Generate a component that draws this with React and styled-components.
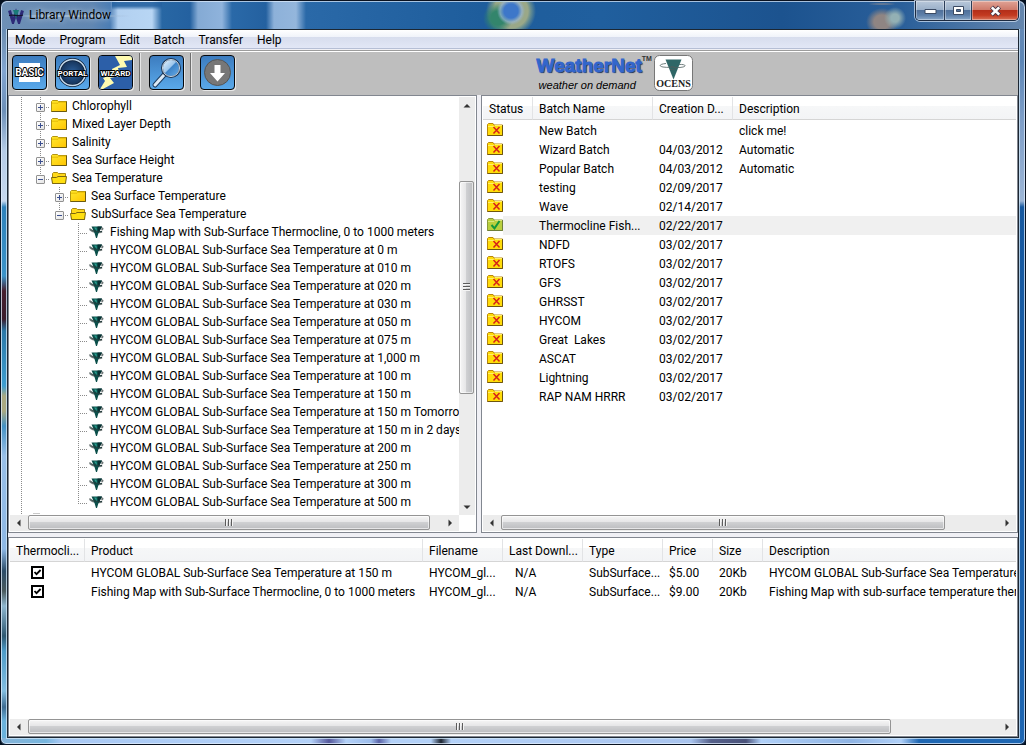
import React from 'react';
import styled, { createGlobalStyle, css } from 'styled-components';

const GlobalStyle = createGlobalStyle`
  * { box-sizing: border-box; }
  body {
    margin: 0;
    background: #04101f;
    font: 12px/18px Roboto, "Segoe UI", "Open Sans", sans-serif;
    color: #000;
  }
  button, input { font: inherit; color: inherit; margin: 0; padding: 0; border: 0; }
`;

/* ---------- window frame ---------- */

const Frame = styled.div`
  display: flex;
  flex-direction: column;
  min-height: 100vh;
  padding: 0 6px 6px;
  border: 1px solid #0a1220;
  border-radius: 7px 7px 6px 6px;
  box-shadow: inset 0 0 0 1px rgba(225, 238, 252, 0.75);
  background:
    linear-gradient(to right, #86b4d8 0, #77b6de 45px, #a9c9f4 60px, #b3d1f8 310px, #55589c 328px, #b3d1f8 345px,
      #9dbdec 370px, #5a63a8 378px, #b3d1f8 390px, #b3d1f8 430px, #1d2430 440px, #b3d1f8 450px, #a9c4ee 690px,
      #55608a 710px, #4a527a 745px, #b0d0f8 760px, #8fb4e4 850px, #b0d0f8 900px, #1e66b2 918px) bottom / 100% 6px no-repeat,
    linear-gradient(to bottom, #4f7db0 0, #7394b8 40px, #82a5d0 70px, #6c8fb8 110px, #b5cbe6 150px, #c6d8ee 200px,
      #2f82bb 206px, #3b93c8 275px, #46202f 290px, #3a1c2c 318px, #2b78a8 330px, #3f9ed0 385px, #a9a982 395px,
      #a9a982 410px, #4492c4 425px, #98bfe8 455px, #8db7e4 548px, #2c4c68 570px, #4a5a5e 590px, #8eb6cf 605px,
      #2f5872 635px, #4d9bc8 650px, #82bde0 690px, #3f6c92 706px, #6ab2dc 720px) left / 7px 100% no-repeat,
    linear-gradient(to bottom, #6c8db6 0, #5d86b6 60px, #7f9fc8 120px, #9db6d6 200px, #16589f 206px, #1e66b2 100%) right / 7px 100% no-repeat,
    #2a64a2;
`;

const TitleBar = styled.header`
  position: relative;
  display: flex;
  align-items: flex-start;
  height: 28px;
  margin: 0 -5px;
  padding: 0 5px 0 6px;
  border-top: 1px solid rgba(225, 238, 252, 0.7);
  border-radius: 6px 6px 0 0;
  background:
    radial-gradient(circle at 509px 9px, #3d77c9 0 7px, rgba(150, 180, 210, 0.7) 11px, rgba(120, 160, 160, 0) 14px),
    radial-gradient(circle at 496px 16px, #33856c 0 7px, rgba(60, 133, 110, 0) 15px),
    radial-gradient(circle at 509px 9px, #9aa888 0 17px, rgba(130, 160, 140, 0.7) 20px, rgba(60, 120, 150, 0) 25px),
    radial-gradient(ellipse at 880px 2px, #a8cdf2 0 8px, #8a8a92 14px, rgba(120, 120, 130, 0) 22px),
    radial-gradient(circle at 893px 16px, #93b0b4 0 4px, rgba(120, 140, 150, 0) 11px),
    radial-gradient(ellipse 16px 14px at 880px 20px, #8f8583 0 50%, rgba(120, 120, 130, 0) 100%),
    radial-gradient(ellipse at 66px 14px, rgba(178, 198, 220, 0.9) 0, rgba(160, 184, 212, 0.6) 45px, rgba(140, 170, 204, 0) 72px),
    linear-gradient(rgba(36, 97, 160, 0.9) 0 4px, rgba(36, 97, 160, 0) 8px) 110px 0 / 50px 100% no-repeat,
    linear-gradient(to right, #6e90b6 0, #6187b2 90px, #4b7db4 108px, #b2d0f0 116px, #b8d6f4 150px, #2867a4 160px,
      #2461a0 188px, #84aad4 196px, #8fb3dc 220px, #2a69a8 230px, #2461a0 264px, #8db1d9 272px, #94b6dc 294px,
      #2a69a8 304px, #1e5d9c 480px, #205f9e 600px, #1c538f 780px, #2a5f9a 900px, #6586ad 100%);
`;

const AppIcon = styled.svg`
  flex: none;
  width: 16px;
  height: 16px;
  margin-top: 6px;
`;

const WindowTitle = styled.h1`
  flex: 1;
  margin: 0 0 0 5px;
  font-size: 12px;
  line-height: 27px;
  font-weight: 400;
  text-shadow: 0 0 6px rgba(255, 255, 255, 0.8);
`;

const WindowButtons = styled.div`
  display: flex;
  height: 20px;
  margin: -1px 0 0;
  border: 1px solid #1c2a40;
  border-top: 0;
  border-radius: 0 0 5px 5px;
  overflow: hidden;
  box-shadow: 0 0 0 1px rgba(215, 230, 246, 0.7);
`;

const WindowButton = styled.button`
  display: grid;
  place-items: center;
  width: ${(p) => p.$width}px;
  background: ${(p) =>
    p.$close
      ? 'linear-gradient(#e0a396 0, #cf7c6c 45%, #b42f1a 50%, #c33a20 75%, #d8745a 100%)'
      : 'linear-gradient(#b9c8da 0, #9bb0c9 45%, #51719b 50%, #5e80aa 75%, #8ba8c8 100%)'};
  box-shadow: inset 0 0 0 1px rgba(255, 255, 255, 0.35);
  & + & { border-left: 1px solid #2b3d58; }
  svg { display: block; }
`;

const Client = styled.main`
  flex: 1;
  display: flex;
  flex-direction: column;
  min-width: 0;
  border: 1px solid #1c2733;
  box-shadow: 0 0 0 1px rgba(205, 228, 245, 0.8);
  background: #f0f0f5;
`;

/* ---------- menu and toolbar ---------- */

const MenuBar = styled.nav`
  display: flex;
  height: 19px;
  background: linear-gradient(#ffffff 0, #f0f3fa 7px, #d7dded 7px, #e2e7f6 100%);
  border-bottom: 1px solid #b6bfd5;
`;

const MenuItem = styled.button`
  padding: 1px 7px 0;
  background: none;
  line-height: 18px;
`;

const Toolbar = styled.div`
  display: flex;
  align-items: flex-start;
  gap: 8px;
  height: 45px;
  margin-top: 1px;
  padding: 4px 4px 0;
  border-top: 1px solid #9c9c9c;
  box-shadow: inset 0 1px 0 #ffffff;
  background: #bebebe;
`;

const ToolButton = styled.button`
  flex: none;
  display: block;
  width: 35px;
  height: 35px;
  border: 1px solid #05080c;
  border-radius: 4px;
  overflow: hidden;
  background: linear-gradient(#3c7cbf, #5aa9ea);
  box-shadow: 1px 1px 0 #e8e8e8;
  svg { display: block; }
`;

const ToolSeparator = styled.span`
  width: 2px;
  height: 38px;
  margin: -2px 0 0 -2px;
  border-left: 1px solid #6e6e6e;
  border-right: 1px solid #e6e6e6;
`;

const Brand = styled.div`
  display: flex;
  gap: 2px;
  margin-left: 29%;
`;

const BrandWords = styled.div`
  display: grid;
  grid-template-columns: auto auto;
  align-content: start;
  padding-left: 3px;
  font-family: "Liberation Sans", Arial, sans-serif;
`;

const BrandName = styled.strong`
  font-size: 19px;
  line-height: 22px;
  font-weight: 700;
  color: #3366cc;
  -webkit-text-stroke: 1px #3366cc;
  text-shadow: 1px 1px 1px #1c2a4a;
`;

const BrandMark = styled.span`
  font-size: 7px;
  line-height: 8px;
  font-weight: 700;
  color: #333;
`;

const BrandLine = styled.em`
  grid-column: 1 / -1;
  padding-left: 2px;
  font-size: 11px;
  line-height: 16px;
`;

const Badge = styled.svg`
  flex: none;
  display: block;
`;

/* ---------- panes ---------- */

const UpperPanes = styled.div`
  display: flex;
  gap: 4px;
`;

const Pane = styled.section`
  display: flex;
  flex-direction: column;
  min-width: 0;
  padding: 1px;
  border: 1px solid #828790;
  background: #fff;
  ${(p) => p.$share && css`flex: ${p.$share} 1 0;`}
`;

const TreePane = styled(Pane)`
  flex: none;
  width: 469px;
  min-width: 240px;
`;

const LowerPane = styled(Pane)`
  flex: 1;
  margin-top: 4px;
`;

const Grow = styled.div`
  flex: 1;
  display: flex;
  min-width: 0;
  overflow: hidden;
`;

/* ---------- tree ---------- */

const Tree = styled.ul`
  flex: 1;
  min-width: 0;
  margin: 0;
  padding: 0 0 0 2px;
  list-style: none;
  overflow: hidden;
`;

const TreeRow = styled.li`
  display: flex;
  height: ${(p) => (p.$peek ? 4 : 18)}px;
  overflow: hidden;
  white-space: nowrap;
`;

const PeekEdge = styled.span`
  width: 7px;
  height: 1px;
  margin: 2px 0 0 2px;
  background: #c9c9c9;
`;

const dotsDown = 'repeating-linear-gradient(to bottom, #8a8a8a 0 1px, transparent 1px 2px)';
const dotsAcross = 'repeating-linear-gradient(to right, #8a8a8a 0 1px, transparent 1px 2px)';

const guideArt = {
  blank: 'none',
  line: `${dotsDown} 9px 0 / 1px 18px no-repeat`,
  tee: `${dotsDown} 9px 0 / 1px 18px no-repeat, ${dotsAcross} 9px 10px / 10px 1px no-repeat`,
  end: `${dotsDown} 9px 0 / 1px 11px no-repeat, ${dotsAcross} 9px 10px / 10px 1px no-repeat`,
};

const Guide = styled.span`
  flex: none;
  width: 19px;
  height: 18px;
  padding: 6px 0 0 5px;
  background: ${(p) => guideArt[p.$kind]};
`;

const Expander = styled.button`
  display: block;
  width: 9px;
  height: 9px;
  border: 1px solid #919191;
  border-radius: 1px;
  background:
    linear-gradient(#3b4f8f, #3b4f8f) 1px 3px / 5px 1px no-repeat,
    ${(p) => (p.$open ? '' : 'linear-gradient(#3b4f8f, #3b4f8f) 3px 1px / 1px 5px no-repeat,')}
    linear-gradient(135deg, #ffffff, #e4e4e4);
`;

const RowIcon = styled.svg`
  flex: none;
  display: block;
  width: 16px;
  height: 16px;
  margin: 1px 5px 0 1px;
`;

/* ---------- scroll bars ---------- */

const ScrollTrack = styled.div`
  flex: none;
  display: flex;
  flex-direction: ${(p) => (p.$vertical ? 'column' : 'row')};
  ${(p) => (p.$vertical ? 'width: 16px;' : 'height: 16px;')}
  ${(p) => p.$inset && 'margin-right: 16px;'}
  background: #ececec;
`;

const ScrollArrow = styled.button`
  flex: none;
  display: grid;
  place-items: center;
  ${(p) => (p.$vertical ? 'height: 17px;' : 'width: 18px;')}
  background: transparent;
  svg { display: block; }
`;

const ScrollSpace = styled.span`
  flex: ${(p) => p.$part} 1 0;
`;

const ScrollThumb = styled.button`
  flex: ${(p) => p.$part} 1 0;
  display: grid;
  place-items: center;
  ${(p) => (p.$vertical ? 'width: 15px;' : 'height: 15px;')}
  border: 1px solid #949494;
  border-radius: 2px;
  background: linear-gradient(${(p) => (p.$vertical ? 'to right' : 'to bottom')}, #f6f6f6 0, #e6e6e7 45%, #cfd0d2 50%, #bcbdc0 100%);
  box-shadow: inset 0 0 0 1px rgba(255, 255, 255, 0.6);
`;

const Grip = styled.span`
  width: ${(p) => (p.$vertical ? 7 : 8)}px;
  height: ${(p) => (p.$vertical ? 8 : 7)}px;
  background: repeating-linear-gradient(${(p) => (p.$vertical ? 'to bottom' : 'to right')}, #5c5c5c 0 1px, #f4f4f4 1px 2px, transparent 2px 3px);
`;

/* ---------- tables ---------- */

const Table = styled.table`
  width: 100%;
  align-self: flex-start;
  table-layout: fixed;
  border-spacing: 0;
`;

const HeadCell = styled.th`
  width: ${(p) => (p.$width ? p.$width + 'px' : 'auto')};
  height: 23px;
  padding: 2px 0 0 6px;
  overflow: hidden;
  white-space: nowrap;
  text-align: left;
  font-weight: 400;
  line-height: 20px;
  background: linear-gradient(#ffffff 0 9px, #f6f7f8 9px, #f3f4f6 100%);
  border-bottom: 1px solid #d5d5d5;
  border-right: ${(p) => (p.$width ? '1px solid #e2e3e5' : '0')};
`;

const Body = styled.tbody`
  &::before { content: ""; display: table-row; height: 1px; }
`;

const Cell = styled.td`
  height: 19px;
  padding: 1px 0 0 ${(p) => p.$pad ?? 6}px;
  overflow: hidden;
  white-space: nowrap;
  line-height: 18px;
  background: ${(p) => (p.$picked ? '#f0f0f0' : 'transparent')};
`;

const StatusCell = styled(Cell)`
  padding: 2px 0 0 4px;
  vertical-align: top;
  background: ${(p) => (p.$picked ? 'linear-gradient(#f0f0f0, #f0f0f0) 20px 0 no-repeat' : 'transparent')};
  svg { display: block; }
`;

const TickCell = styled(Cell)`
  padding: 3px 0 0 21px;
  vertical-align: top;
`;

const Tick = styled.input`
  display: block;
  appearance: none;
  width: 13px;
  height: 13px;
  border: 2px solid #000;
  background: #fff;
  &:checked {
    background: #fff url("data:image/svg+xml,%3Csvg xmlns='http://www.w3.org/2000/svg' viewBox='0 0 9 9'%3E%3Cpath d='M1.5 4l2 2.2L7.6 2' fill='none' stroke='%23000' stroke-width='1.8'/%3E%3C/svg%3E") center / 9px 9px;
  }
`;

/* ---------- drawings ---------- */

const Folder = () => (
  <RowIcon viewBox="0 0 16 16" aria-hidden="true">
    <defs>
      <linearGradient id="fold" x1="0" y1="0" x2="1" y2="1">
        <stop offset="0" stopColor="#ffe92e" />
        <stop offset="1" stopColor="#ffc400" />
      </linearGradient>
    </defs>
    <path d="M.5 13.5V3.5l1-1h5l1 1h8v10z" fill="url(#fold)" stroke="#b39512" />
    <path d="M1 5.2h6l1-1h7" fill="none" stroke="#e0b400" strokeWidth=".8" />
    <path d="M.5 13.5h15v-10" fill="none" stroke="#6b5a10" />
  </RowIcon>
);

const OpenFolder = () => (
  <RowIcon viewBox="0 0 16 16" aria-hidden="true">
    <path d="M1.5 13.5v-10l1-1h4l1 1h7v10z" fill="#ffd91a" stroke="#a98a10" />
    <path d="M.5 7.5h5l1.500-1h8.500l-1 7H1.500z" fill="#ffdf10" stroke="#7d6810" />
  </RowIcon>
);

const ProductIcon = () => (
  <RowIcon viewBox="0 0 16 16" aria-hidden="true">
    <path d="M1 4.500c-.5 1.500 2 3 5 3.500s6 1 7-.5M11 4c3-.5 3.500.8 1.500 2" fill="none" stroke="#6d7676" strokeWidth="1.500" />
    <path d="M2.500 2.500H13L9.500 9 8 14H7L5.500 9z" fill="#0b4f4a" />
    <path d="M8.500 2.500H13L9.500 9z" fill="#062f30" />
    <path d="M5 3.500h2.500l.5 4z" fill="#2aa090" />
    <path d="M1.500 5c1.500 2 6.500 2.500 11.500 2.500" fill="none" stroke="#233c3c" />
  </RowIcon>
);

const BatchIcon = ({ ok }) => (
  <svg width="16" height="13" viewBox="0 0 16 13" aria-hidden="true">
    <path d="M.5 12.500V1.500l1-1h4.500l1 1.500h8.500v10.500z" fill={ok ? '#b9cf3e' : '#ffdc0a'} stroke={ok ? '#8a9a3c' : '#b8860b'} />
    <path d="M1 3.500h6l1-1h7" fill="none" stroke={ok ? '#dbe67c' : '#ffef6a'} />
    <path d="M.5 12.500h15V2" fill="none" stroke={ok ? '#6f7f3a' : '#6e5510'} />
    {ok ? (
      <path d="M4.500 7l3 3.300L12.500 3" fill="none" stroke="#12973c" strokeWidth="2" />
    ) : (
      <path d="M6.500 4l6 6.500M12.500 4l-6 6.500" fill="none" stroke="#d6201a" strokeWidth="1.500" />
    )}
  </svg>
);

const Label = styled.text`
  font-family: Roboto, "Liberation Sans", Arial, sans-serif;
  font-weight: 700;
  font-size: ${(p) => p.$size}px;
  fill: #fff;
  stroke: #000;
  stroke-width: 2px;
  stroke-linejoin: round;
  paint-order: stroke;
  text-anchor: middle;
`;

const BasicArt = () => (
  <svg width="33" height="33" viewBox="0 0 33 33" aria-hidden="true">
    <path d="M6 7h21v19H6z" fill="#fff" />
    <Label $size={10} x="16.500" y="20">BASIC</Label>
  </svg>
);

const PortalArt = () => (
  <svg width="33" height="33" viewBox="0 0 33 33" aria-hidden="true">
    <defs>
      <radialGradient id="portal">
        <stop offset="0" stopColor="#2b5f9c" />
        <stop offset="1" stopColor="#143055" />
      </radialGradient>
    </defs>
    <circle cx="16.500" cy="16.500" r="13" fill="url(#portal)" stroke="#0c1f38" strokeWidth="3" />
    <circle cx="16.500" cy="16.500" r="13" fill="none" stroke="#c4d8ea" strokeWidth="1.500" />
    <Label $size={8} x="16.500" y="20">PORTAL</Label>
  </svg>
);

const WizardArt = () => (
  <svg width="33" height="33" viewBox="0 0 33 33" aria-hidden="true">
    <path d="M0 0h33v33H0z" fill="#2c5fa8" />
    <path d="M16 0h17v4l-8 1 3 6-9 1 2 8-10 2 4 5-11 6H1l5-8-2-3 10-4-1-5 8-4z" fill="#fffbb0" />
    <Label $size={8} x="16.500" y="20">WIZARD</Label>
  </svg>
);

const SearchArt = () => (
  <svg width="33" height="33" viewBox="0 0 33 33" aria-hidden="true">
    <defs>
      <linearGradient id="lens" x1="0" y1="0" x2="1" y2="1">
        <stop offset="0" stopColor="#f4faff" />
        <stop offset=".45" stopColor="#9cc6ec" />
        <stop offset=".5" stopColor="#3d83c8" />
        <stop offset="1" stopColor="#6cb0ea" />
      </linearGradient>
    </defs>
    <path d="M14 19L5 29" stroke="#1c3c60" strokeWidth="5" strokeLinecap="round" />
    <path d="M14 19L5 29" stroke="#dbe9f5" strokeWidth="3" strokeLinecap="round" />
    <circle cx="21" cy="12" r="9" fill="url(#lens)" stroke="#1c3350" strokeWidth="2" />
    <circle cx="21" cy="12" r="8.500" fill="none" stroke="#cfdde9" />
  </svg>
);

const DownloadArt = () => (
  <svg width="33" height="33" viewBox="0 0 33 33" aria-hidden="true">
    <circle cx="16.500" cy="16.500" r="13" fill="#777" stroke="#555" />
    <path d="M13.500 9h6v8h4.500l-7.500 8.500L9 17h4.500z" fill="#fff" />
  </svg>
);

const Arrow = ({ d }) => (
  <svg width="8" height="8" viewBox="0 0 8 8" aria-hidden="true">
    <path d={d} fill="#333" />
  </svg>
);

const HBar = ({ thumb, rest, inset }) => (
  <ScrollTrack $inset={inset}>
    <ScrollArrow aria-label="Scroll left"><Arrow d="M5.500 .5v7L2 4z" /></ScrollArrow>
    <ScrollThumb $part={thumb} aria-label="Scroll position"><Grip /></ScrollThumb>
    <ScrollSpace $part={rest} />
    <ScrollArrow aria-label="Scroll right"><Arrow d="M2.500 .5v7L6 4z" /></ScrollArrow>
  </ScrollTrack>
);

const VBar = () => (
  <ScrollTrack $vertical>
    <ScrollArrow $vertical aria-label="Scroll up"><Arrow d="M.5 5.500h7L4 2z" /></ScrollArrow>
    <ScrollSpace $part={67} />
    <ScrollThumb $vertical $part={212} aria-label="Scroll position"><Grip $vertical /></ScrollThumb>
    <ScrollSpace $part={105} />
    <ScrollArrow $vertical aria-label="Scroll down"><Arrow d="M.5 2.500h7L4 6z" /></ScrollArrow>
  </ScrollTrack>
);

/* ---------- data ---------- */

const menus = ['Mode', 'Program', 'Edit', 'Batch', 'Transfer', 'Help'];

const hycom = ['0 m', '010 m', '020 m', '030 m', '050 m', '075 m', '1,000 m', '100 m', '150 m',
  '150 m Tomorrow', '150 m in 2 days', '200 m', '250 m', '300 m', '500 m'];

const treeRows = [
  ...['Chlorophyll', 'Mixed Layer Depth', 'Salinity', 'Sea Surface Height'].map((text) => ({
    text, guides: ['line', 'tee'], state: 'closed',
  })),
  { text: 'Sea Temperature', guides: ['line', 'end'], state: 'open' },
  { text: 'Sea Surface Temperature', guides: ['line', 'blank', 'tee'], state: 'closed' },
  { text: 'SubSurface Sea Temperature', guides: ['line', 'blank', 'end'], state: 'open' },
  { text: 'Fishing Map with Sub-Surface Thermocline, 0 to 1000 meters', guides: ['line', 'blank', 'blank', 'tee'] },
  ...hycom.map((depth, i) => ({
    text: `HYCOM GLOBAL Sub-Surface Sea Temperature at ${depth}`,
    guides: ['line', 'blank', 'blank', i === hycom.length - 1 ? 'end' : 'tee'],
  })),
];

const batches = [
  ['New Batch', '', 'click me!'],
  ['Wizard Batch', '04/03/2012', 'Automatic'],
  ['Popular Batch', '04/03/2012', 'Automatic'],
  ['testing', '02/09/2017', ''],
  ['Wave', '02/14/2017', ''],
  ['Thermocline Fish...', '02/22/2017', '', true],
  ['NDFD', '03/02/2017', ''],
  ['RTOFS', '03/02/2017', ''],
  ['GFS', '03/02/2017', ''],
  ['GHRSST', '03/02/2017', ''],
  ['HYCOM', '03/02/2017', ''],
  ['Great\u00a0 Lakes', '03/02/2017', ''],
  ['ASCAT', '03/02/2017', ''],
  ['Lightning', '03/02/2017', ''],
  ['RAP NAM HRRR', '03/02/2017', ''],
];

const products = [
  ['HYCOM GLOBAL Sub-Surface Sea Temperature at 150 m', '$5.00', 'HYCOM GLOBAL Sub-Surface Sea Temperature at 150 m'],
  ['Fishing Map with Sub-Surface Thermocline, 0 to 1000 meters', '$9.00', 'Fishing Map with sub-surface temperature thermocline'],
];

export default function App() {
  return (
    <>
      <GlobalStyle />
      <Frame>
        <TitleBar>
          <AppIcon viewBox="0 0 16 16" aria-hidden="true">
            <path d="M1.500 2.500L5 14l3-9 3 9 3.500-11.500" fill="none" stroke="#2d2a78" strokeWidth="3" />
            <path d="M5 2h6L8 11z" fill="#1a7a78" />
            <path d="M1 7.500c4-1.500 9 1.500 14-.5" fill="none" stroke="#15152e" strokeWidth="1.200" />
          </AppIcon>
          <WindowTitle>Library Window</WindowTitle>
          <WindowButtons>
            <WindowButton $width={28} aria-label="Minimize">
              <svg width="13" height="7" viewBox="0 0 13 7"><path d="M1 2.500h11v4H1z" fill="#fff" stroke="#3b4a63" /></svg>
            </WindowButton>
            <WindowButton $width={27} aria-label="Maximize">
              <svg width="13" height="11" viewBox="0 0 13 11"><path d="M1.500 1.500h10v8h-10z M4.500 4.500v2h4v-2z" fill="#fff" fillRule="evenodd" stroke="#3b4a63" /></svg>
            </WindowButton>
            <WindowButton $width={47} $close aria-label="Close">
              <svg width="13" height="12" viewBox="0 0 13 12">
                <path d="M2.500 2l8 8M10.500 2l-8 8" stroke="#4a3a4a" strokeWidth="4.400" />
                <path d="M2.800 2.300l7.400 7.400M10.200 2.300L2.800 9.700" stroke="#fff" strokeWidth="2.600" />
              </svg>
            </WindowButton>
          </WindowButtons>
        </TitleBar>

        <Client>
          <MenuBar>
            {menus.map((m) => <MenuItem key={m}>{m}</MenuItem>)}
          </MenuBar>

          <Toolbar>
            <ToolButton aria-label="Basic"><BasicArt /></ToolButton>
            <ToolButton aria-label="Portal"><PortalArt /></ToolButton>
            <ToolButton aria-label="Wizard"><WizardArt /></ToolButton>
            <ToolSeparator />
            <ToolButton aria-label="Search"><SearchArt /></ToolButton>
            <ToolSeparator />
            <ToolButton aria-label="Download"><DownloadArt /></ToolButton>
            <Brand>
              <BrandWords>
                <BrandName>WeatherNet</BrandName>
                <BrandMark>TM</BrandMark>
                <BrandLine>weather on demand</BrandLine>
              </BrandWords>
              <Badge width="39" height="36" viewBox="0 0 39 36" aria-label="OCENS">
                <rect x=".5" y=".5" width="38" height="35" rx="5" fill="#fff" stroke="#777" />
                <path d="M11.500 4.500h16l-8 20z" fill="#2f6767" />
                <path d="M12 8.500c-6 .5-8 2.500-3 3.500s9-.5 12 .5-1 2.500-5 2M25 9.500c6-.5 8 1.500 4 2.500s-8 .5-12-.5" fill="none" stroke="#4c5e5e" strokeWidth=".8" />
                <text x="19.500" y="32" textAnchor="middle" fontFamily="Liberation Serif, Times New Roman, serif" fontSize="10" fontWeight="700" fill="#222">OCENS</text>
              </Badge>
            </Brand>
          </Toolbar>

          <UpperPanes>
            <TreePane aria-label="Library">
              <Grow>
                <Tree>
                  {treeRows.map((row) => (
                    <TreeRow key={row.text}>
                      {row.guides.map((kind, i) => (
                        <Guide key={i} $kind={kind}>
                          {row.state && i === row.guides.length - 1 && (
                            <Expander $open={row.state === 'open'} aria-label={`Toggle ${row.text}`} />
                          )}
                        </Guide>
                      ))}
                      {row.state === 'open' ? <OpenFolder /> : row.state ? <Folder /> : <ProductIcon />}
                      {row.text}
                    </TreeRow>
                  ))}
                  <TreeRow $peek aria-hidden="true"><Guide $kind="line" /><PeekEdge /></TreeRow>
                </Tree>
                <VBar />
              </Grow>
              <HBar thumb={402} rest={11} inset />
            </TreePane>

            <Pane $share={1} aria-label="Batches">
              <Grow>
                <Table>
                  <thead>
                    <tr>
                      <HeadCell $width={50}>Status</HeadCell>
                      <HeadCell $width={120}>Batch Name</HeadCell>
                      <HeadCell $width={80}>Creation D...</HeadCell>
                      <HeadCell>Description</HeadCell>
                    </tr>
                  </thead>
                  <Body>
                    {batches.map(([name, date, note, picked]) => (
                      <tr key={name}>
                        <StatusCell $picked={picked}><BatchIcon ok={picked} /></StatusCell>
                        <Cell $picked={picked}>{name}</Cell>
                        <Cell $picked={picked}>{date}</Cell>
                        <Cell $picked={picked}>{note}</Cell>
                      </tr>
                    ))}
                  </Body>
                </Table>
              </Grow>
              <HBar thumb={445} rest={53} />
            </Pane>
          </UpperPanes>

          <LowerPane aria-label="Products">
            <Grow>
              <Table>
                <thead>
                  <tr>
                    <HeadCell $width={75}>Thermocli...</HeadCell>
                    <HeadCell $width={338}>Product</HeadCell>
                    <HeadCell $width={80}>Filename</HeadCell>
                    <HeadCell $width={80}>Last Downl...</HeadCell>
                    <HeadCell $width={80}>Type</HeadCell>
                    <HeadCell $width={50}>Price</HeadCell>
                    <HeadCell $width={50}>Size</HeadCell>
                    <HeadCell>Description</HeadCell>
                  </tr>
                </thead>
                <Body>
                  {products.map(([name, price, text]) => (
                    <tr key={name}>
                      <TickCell><Tick type="checkbox" defaultChecked aria-label={name} /></TickCell>
                      <Cell>{name}</Cell>
                      <Cell>HYCOM_gl...</Cell>
                      <Cell $pad={12}>N/A</Cell>
                      <Cell>SubSurface...</Cell>
                      <Cell>{price}</Cell>
                      <Cell>20Kb</Cell>
                      <Cell>{text}</Cell>
                    </tr>
                  ))}
                </Body>
              </Table>
            </Grow>
            <HBar thumb={864} rest={107} />
          </LowerPane>
        </Client>
      </Frame>
    </>
  );
}
